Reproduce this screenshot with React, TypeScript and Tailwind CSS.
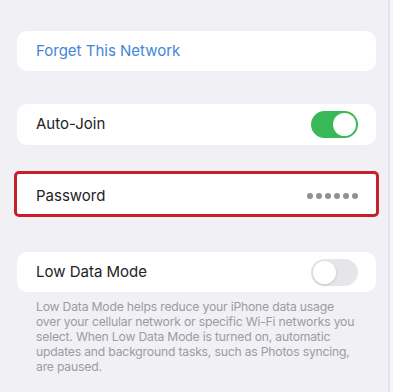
export default function App() {
  const font = { fontFamily: 'Inter, "Noto Sans", sans-serif' };

  return (
    <div className="w-[393px] h-[392px] overflow-hidden flex bg-[#f0f0f5]" style={font}>
      <div className="flex-1 flex flex-col pt-[31px]">
        {/* Forget */}
        <div className="ml-[17px] mr-[12px] h-[40px] bg-white rounded-[10px] flex items-center pl-[19px]">
          <span className="text-[15px] text-[#3f87d6]">Forget This Network</span>
        </div>

        {/* Auto-Join */}
        <div className="mt-[33px] ml-[17px] mr-[12px] h-[41px] bg-white rounded-[10px] flex items-center justify-between pl-[19px] pr-[18px]">
          <span className="text-[15px] text-[#222225]">Auto-Join</span>
          <div className="w-[47px] h-[27px] rounded-full bg-[#38b856] flex items-center justify-end p-[2px]">
            <div className="w-[23px] h-[23px] rounded-full bg-white" />
          </div>
        </div>

        {/* Password (highlighted) */}
        <div className="mt-[26px] ml-[14px] mr-[9px] h-[46px] bg-white rounded-[5px] border-[3px] border-[#c8202b] flex items-center justify-between pl-[19px] pr-[18px]">
          <span className="text-[15px] text-[#222225] mt-[4px]">Password</span>
          <div className="flex gap-[3px] mt-[4px]">
            {[0, 1, 2, 3, 4, 5].map((i) => (
              <div key={i} className="w-[6px] h-[6px] rounded-full bg-[#909096]" />
            ))}
          </div>
        </div>

        {/* Low Data Mode */}
        <div className="mt-[35px] ml-[17px] mr-[12px] h-[40px] bg-white rounded-[10px] flex items-center justify-between pl-[19px] pr-[18px]">
          <span className="text-[15px] text-[#222225]">Low Data Mode</span>
          <div className="w-[47px] h-[27px] rounded-full bg-[#e6e6ea] flex items-center p-[2px]">
            <div className="w-[23px] h-[23px] rounded-full bg-white shadow-[0_1px_3px_rgba(0,0,0,0.15)]" />
          </div>
        </div>

        <p className="mt-[7px] ml-[36px] text-[12.2px] leading-[15px] tracking-[-0.2px] text-[#9c9ca2] whitespace-nowrap">
          Low Data Mode helps reduce your iPhone data usage
          <br />
          over your cellular network or specific Wi-Fi networks you
          <br />
          select. When Low Data Mode is turned on, automatic
          <br />
          updates and background tasks, such as Photos syncing,
          <br />
          are paused.
        </p>
      </div>
      <div className="w-[2px] bg-[#e3e3e8]" />
      <div className="w-[3px] bg-[#f5f5f8]" />
    </div>
  );
}
